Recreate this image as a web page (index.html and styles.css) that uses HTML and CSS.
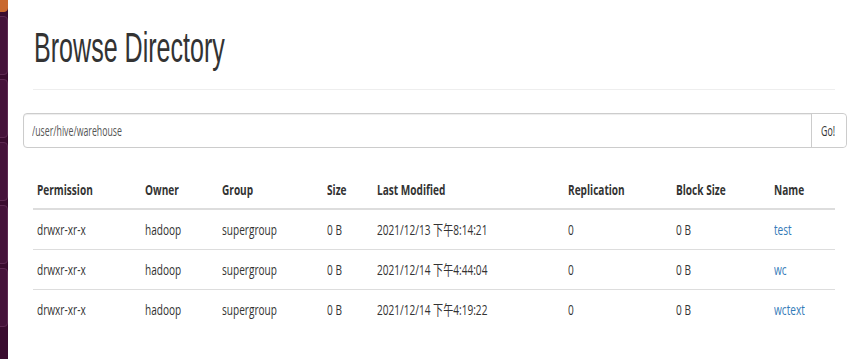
FILE: index.html
```html
<!DOCTYPE html>
<html>
<head>
<meta charset="utf-8">
<link rel="stylesheet" href="styles.css">
</head>
<body>
<div class="screen">
  <aside class="launcher">
    <div class="tile tile-active"></div>
    <div class="tile"></div>
    <div class="tile"></div>
    <div class="tile"></div>
    <div class="tile"></div>
    <div class="tile"></div>
  </aside>
  <main class="content">
    <header class="page-header">
      <h1 class="title"><span class="sq-title">Browse Directory</span></h1>
    </header>
    <form class="input-group">
      <div class="field"><span class="sq-input">/user/hive/warehouse</span></div>
      <div class="go"><span class="sq-input">Go!</span></div>
    </form>
    <table class="listing">
      <colgroup>
        <col class="c1"><col class="c2"><col class="c3"><col class="c4">
        <col class="c5"><col class="c6"><col class="c7"><col class="c8">
      </colgroup>
      <thead>
        <tr>
          <th><span class="sq">Permission</span></th>
          <th><span class="sq">Owner</span></th>
          <th><span class="sq">Group</span></th>
          <th><span class="sq">Size</span></th>
          <th><span class="sq">Last Modified</span></th>
          <th><span class="sq">Replication</span></th>
          <th><span class="sq">Block Size</span></th>
          <th><span class="sq">Name</span></th>
        </tr>
      </thead>
      <tbody>
        <tr>
          <td><span class="sq">drwxr-xr-x</span></td>
          <td><span class="sq">hadoop</span></td>
          <td><span class="sq">supergroup</span></td>
          <td><span class="sq">0 B</span></td>
          <td><span class="sq">2021/12/13 下午8:14:21</span></td>
          <td><span class="sq">0</span></td>
          <td><span class="sq">0 B</span></td>
          <td><a class="sq link" href="#">test</a></td>
        </tr>
        <tr>
          <td><span class="sq">drwxr-xr-x</span></td>
          <td><span class="sq">hadoop</span></td>
          <td><span class="sq">supergroup</span></td>
          <td><span class="sq">0 B</span></td>
          <td><span class="sq">2021/12/14 下午4:44:04</span></td>
          <td><span class="sq">0</span></td>
          <td><span class="sq">0 B</span></td>
          <td><a class="sq link" href="#">wc</a></td>
        </tr>
        <tr>
          <td><span class="sq">drwxr-xr-x</span></td>
          <td><span class="sq">hadoop</span></td>
          <td><span class="sq">supergroup</span></td>
          <td><span class="sq">0 B</span></td>
          <td><span class="sq">2021/12/14 下午4:19:22</span></td>
          <td><span class="sq">0</span></td>
          <td><span class="sq">0 B</span></td>
          <td><a class="sq link" href="#">wctext</a></td>
        </tr>
      </tbody>
    </table>
  </main>
</div>
</body>
</html>
```
FILE: styles.css
```css
* { box-sizing: border-box; }
html, body { margin: 0; padding: 0; background: #fff; }
body {
  width: 860px;
  height: 359px;
  overflow: hidden;
  font-family: "Open Sans", "Noto Sans CJK SC", sans-serif;
  font-size: 14px;
  line-height: 20px;
  color: #333;
}
.screen {
  display: flex;
  height: 359px;
}
.launcher {
  width: 8px;
  flex: none;
  background: #3a0c2f;
  display: flex;
  flex-direction: column;
  gap: 4px;
  overflow: hidden;
}
.tile {
  height: 59px;
  margin-left: -6px;
  border: 1px solid #5e2a52;
  border-radius: 4px;
  background: #45133a;
}
.tile-active {
  height: 18px;
  margin-top: -6px;
  background: #c9692f;
  border-color: #c9692f;
}
.content {
  flex: 1;
  padding: 25px 13px 0 15px;
}
.page-header {
  margin: 0 12px 0 10px;
  padding-bottom: 18px;
  border-bottom: 1px solid #eee;
}
.title {
  margin: 0;
  font-family: "Liberation Sans", Arial, sans-serif;
  font-weight: 400;
  font-size: 42px;
  line-height: 46px;
  color: #333;
  white-space: nowrap;
}
.sq-title {
  display: inline-block;
  transform: scaleX(0.597);
  transform-origin: 0 50%;
  margin-left: 1px;
}
.sq {
  display: inline-block;
  white-space: nowrap;
  transform: scaleX(0.72);
  transform-origin: 0 50%;
}
.sq-input {
  display: inline-block;
  white-space: nowrap;
  transform: scaleX(0.585);
  transform-origin: 0 50%;
}
.input-group {
  margin: 23px 0 0 0;
  display: flex;
  height: 35px;
  border: 1px solid #ccc;
  border-radius: 4px;
  box-shadow: inset 0 1px 1px rgba(0,0,0,0.075);
  font-size: 15px;
  color: #555;
}
.field {
  flex: 1;
  padding: 6px 8px 0 8px;
}
.go {
  width: 35px;
  flex: none;
  border-left: 1px solid #ccc;
  padding: 6px 0 0 9px;
  color: #333;
  background: #fff;
  border-radius: 0 4px 4px 0;
}
.listing {
  margin: 22px 12px 0 10px;
  width: 802px;
  table-layout: fixed;
  border-collapse: collapse;
  border-spacing: 0;
}
.c1 { width: 107px; }
.c2 { width: 77px; }
.c3 { width: 105px; }
.c4 { width: 50px; }
.c5 { width: 191px; }
.c6 { width: 108px; }
.c7 { width: 98px; }
.c8 { width: 66px; }
.listing th {
  text-align: left;
  font-weight: 700;
  padding: 10px 5px 8px 5px;
  border-bottom: 2px solid #ddd;
  white-space: nowrap;
}
.listing td {
  padding: 10px 5px 9px 5px;
  border-top: 1px solid #ddd;
  white-space: nowrap;
}
.listing th:first-child, .listing td:first-child { padding-left: 4px; }
.link {
  color: #337ab7;
  text-decoration: none;
}
```
